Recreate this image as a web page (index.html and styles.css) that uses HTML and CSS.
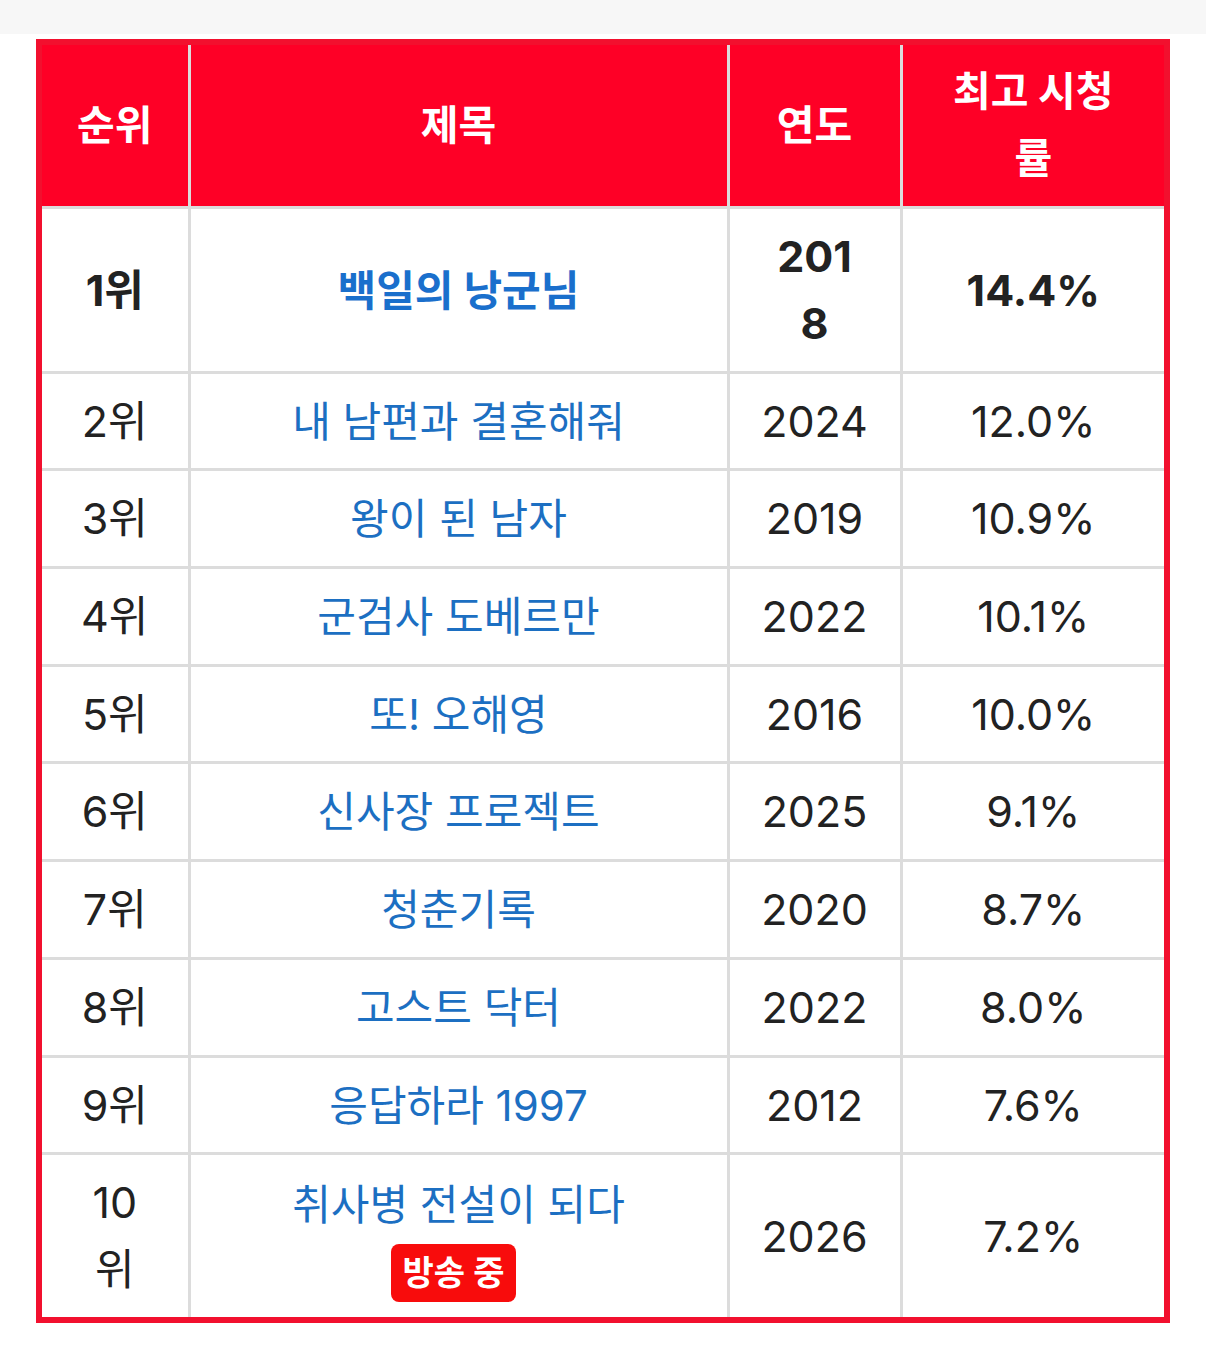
FILE: index.html
```html
<!DOCTYPE html>
<html lang="ko">
<head>
<meta charset="utf-8">
<title>시청률 순위</title>
<link rel="stylesheet" href="styles.css">
</head>
<body>
<div class="topband"></div>
<main class="wrap">
  <table class="rank">
    <colgroup>
      <col class="c-rank">
      <col class="c-title">
      <col class="c-year">
      <col class="c-rate">
    </colgroup>
    <thead>
      <tr>
        <th>순위</th>
        <th>제목</th>
        <th>연도</th>
        <th>최고 시청<br>률</th>
      </tr>
    </thead>
    <tbody>
      <tr class="top">
        <td>1위</td>
        <td class="title">백일의 낭군님</td>
        <td>201<br>8</td>
        <td>14.4%</td>
      </tr>
      <tr><td>2위</td><td class="title">내 남편과 결혼해줘</td><td>2024</td><td>12.0%</td></tr>
      <tr><td>3위</td><td class="title">왕이 된 남자</td><td>2019</td><td>10.9%</td></tr>
      <tr><td>4위</td><td class="title">군검사 도베르만</td><td>2022</td><td>10.1%</td></tr>
      <tr><td>5위</td><td class="title">또! 오해영</td><td>2016</td><td>10.0%</td></tr>
      <tr><td>6위</td><td class="title">신사장 프로젝트</td><td>2025</td><td>9.1%</td></tr>
      <tr><td>7위</td><td class="title">청춘기록</td><td>2020</td><td>8.7%</td></tr>
      <tr><td>8위</td><td class="title">고스트 닥터</td><td>2022</td><td>8.0%</td></tr>
      <tr><td>9위</td><td class="title">응답하라 1997</td><td>2012</td><td>7.6%</td></tr>
      <tr>
        <td>10<br>위</td>
        <td class="title">취사병 전설이 되다<span class="badge">방송 중</span></td>
        <td>2026</td>
        <td>7.2%</td>
      </tr>
    </tbody>
  </table>
</main>
</body>
</html>
```

FILE: styles.css
```css
html, body {
  margin: 0;
  padding: 0;
  background: #ffffff;
}
body {
  font-family: Inter, "Noto Sans CJK KR", sans-serif;
  color: #222222;
}
.topband {
  height: 34px;
  background: #f7f7f7;
}
.wrap {
  padding: 5px 36px 40px 36px;
}
.rank {
  width: 1128px;
  border-collapse: collapse;
  table-layout: fixed;
  border: 6px solid #f2102e;
  font-size: 43px;
  line-height: 67px;
}
.c-rank { width: 150px; }
.c-title { width: 539px; }
.c-year { width: 173px; }
.c-rate { width: 266px; }
.rank th,
.rank td {
  border: 3px solid #dcdcdc;
  padding: 14px 4px 13.7px;
  text-align: center;
  vertical-align: middle;
}
.rank th {
  background: #fe0026;
  color: #ffffff;
  font-weight: 700;
  font-size: 41px;
  padding: 13px 4px 14px;
}
.rank td.title {
  color: #1c6fc2;
  font-size: 42px;
}
.rank tr.top td {
  font-weight: 700;
}
.rank tr.top td.title {
  color: #1a6fcc;
}
.badge {
  display: block;
  width: fit-content;
  margin: 6px auto 0;
  position: relative;
  left: -5px;
  background: #f80c0c;
  color: #ffffff;
  font-size: 34px;
  font-weight: 700;
  line-height: 40px;
  padding: 9px 12px;
  border-radius: 8px;
}
```
